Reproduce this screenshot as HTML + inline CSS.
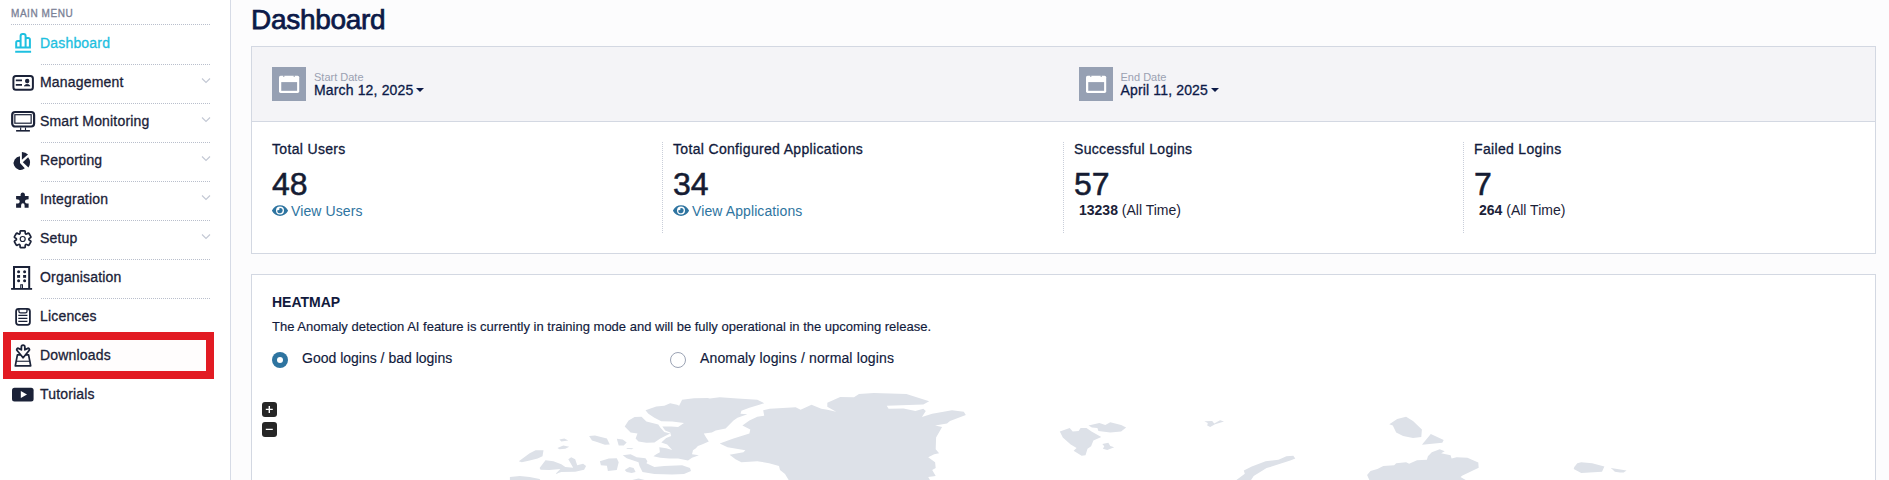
<!DOCTYPE html>
<html><head><meta charset="utf-8">
<style>
*{box-sizing:border-box;margin:0;padding:0}
html,body{width:1889px;height:480px;overflow:hidden;background:#fcfcfd;font-family:"Liberation Sans",sans-serif;color:#1b2238}
.abs{position:absolute}
#side{position:absolute;left:0;top:0;width:231px;height:480px;background:#fff;border-right:1px solid #d6dbe6}
.mm{position:absolute;left:11px;top:8px;font-size:10px;color:#7a8196;letter-spacing:0.55px;-webkit-text-stroke:0.3px #7a8196}
.sep{position:absolute;height:0;border-top:1px dotted #b9bfcc}
.nav{position:absolute;left:40px;font-size:14px;letter-spacing:0.18px;color:#1b2238;white-space:nowrap;-webkit-text-stroke:0.3px #1b2238}
.chev{position:absolute;left:201px;width:7px;height:7px;border-right:1px solid #c5cad6;border-bottom:1px solid #c5cad6;transform:rotate(45deg)}
#title{position:absolute;left:251px;top:4px;font-size:28px;letter-spacing:-0.3px;color:#0c1a48;-webkit-text-stroke:0.75px #0c1a48}
.card{position:absolute;background:#fff;border:1px solid #d3d8e2}
.hdr{position:absolute;left:0;top:0;right:0;height:75px;background:#f4f4f7;border-bottom:1px solid #d3d8e2}
.calbox{position:absolute;width:34px;height:34px;background:#96a0b3}
.dlabel{position:absolute;font-size:11px;color:#9aa1b2}
.dval{position:absolute;font-size:14px;letter-spacing:0.15px;color:#0c1a48;white-space:nowrap;-webkit-text-stroke:0.3px #0c1a48}
.caret{display:inline-block;width:0;height:0;border-left:4px solid transparent;border-right:4px solid transparent;border-top:4px solid #0c1a48;vertical-align:middle;margin-left:3px;position:relative;top:-1px}
.stt{position:absolute;font-size:14px;letter-spacing:0.33px;color:#111a3c;white-space:nowrap;-webkit-text-stroke:0.3px #111a3c}
.num{position:absolute;font-size:32px;color:#151c33;-webkit-text-stroke:0.55px #151c33}
.lnk{position:absolute;font-size:14px;letter-spacing:0.1px;color:#2e74a0;white-space:nowrap}
.vdiv{position:absolute;top:142px;height:91px;width:0;border-left:1px dotted #c9ced9}
.alltime{position:absolute;font-size:14px;color:#1b2238;white-space:nowrap}
</style></head>
<body>
<div id="side">
  <div class="mm">MAIN MENU</div>
  <div class="sep" style="left:11px;width:199px;top:24px"></div>
  <div class="nav" style="top:35px;color:#1ec0e0;-webkit-text-stroke:0.3px #1ec0e0">Dashboard</div>
  <div class="sep" style="left:41px;width:169px;top:64px"></div>
  <div class="nav" style="top:74px">Management</div><svg class="abs" style="left:200px;top:77px" width="12" height="8"><path d="M2 1.5L6 5.5L10 1.5" fill="none" stroke="#c3c8d4" stroke-width="1.1"/></svg>
  <div class="sep" style="left:41px;width:169px;top:103px"></div>
  <div class="nav" style="top:113px">Smart Monitoring</div><svg class="abs" style="left:200px;top:116px" width="12" height="8"><path d="M2 1.5L6 5.5L10 1.5" fill="none" stroke="#c3c8d4" stroke-width="1.1"/></svg>
  <div class="sep" style="left:41px;width:169px;top:142px"></div>
  <div class="nav" style="top:152px">Reporting</div><svg class="abs" style="left:200px;top:155px" width="12" height="8"><path d="M2 1.5L6 5.5L10 1.5" fill="none" stroke="#c3c8d4" stroke-width="1.1"/></svg>
  <div class="sep" style="left:41px;width:169px;top:181px"></div>
  <div class="nav" style="top:191px">Integration</div><svg class="abs" style="left:200px;top:194px" width="12" height="8"><path d="M2 1.5L6 5.5L10 1.5" fill="none" stroke="#c3c8d4" stroke-width="1.1"/></svg>
  <div class="sep" style="left:41px;width:169px;top:220px"></div>
  <div class="nav" style="top:230px">Setup</div><svg class="abs" style="left:200px;top:233px" width="12" height="8"><path d="M2 1.5L6 5.5L10 1.5" fill="none" stroke="#c3c8d4" stroke-width="1.1"/></svg>
  <div class="sep" style="left:41px;width:169px;top:259px"></div>
  <div class="nav" style="top:269px">Organisation</div>
  <div class="sep" style="left:41px;width:169px;top:298px"></div>
  <div class="nav" style="top:308px">Licences</div>
  <div class="abs" style="left:3px;top:332px;width:211px;height:47px;border:8px solid #e21b23;background:#fffdfd"></div>
  <div class="nav" style="top:347px">Downloads</div>
  <div class="nav" style="top:386px">Tutorials</div>
  <svg class="abs" style="left:0;top:0" width="231" height="480" viewBox="0 0 231 480">
    <g fill="none" stroke="#1ec0e0" stroke-width="2">
      <path d="M16.2 47.6V42.4a1.5 1.5 0 0 1 1.5-1.5H19.1a1.5 1.5 0 0 1 1.5 1.5V47.6ZM20.6 47.6V35.9a2 2 0 0 1 2-2H23.6a2 2 0 0 1 2 2V47.6ZM25.6 47.6V39.5a1.5 1.5 0 0 1 1.5-1.5H28.4a1.5 1.5 0 0 1 1.5 1.5V47.6Z"/>
      <path d="M15.2 51.75H31.1"/>
    </g>
    <g fill="none" stroke="#1b2238">
      <rect x="13.4" y="76" width="19.5" height="13.75" rx="2.5" stroke-width="2"/>
      <path d="M15.8 80.4H22M15.8 84.9H22" stroke-width="1.8"/>
      <circle cx="27.2" cy="81" r="1.6" fill="#1b2238" stroke-width="1.2"/>
      <path d="M24.3 85.9Q27.2 82.6 30.1 85.9Z" fill="#1b2238" stroke-width="0.8"/>
      <rect x="12.2" y="112" width="21.9" height="14.5" rx="3" stroke-width="2.2"/>
      <rect x="14.85" y="114.7" width="16.3" height="8.5" stroke-width="1.2"/>
      <path d="M20.65 127.5V130M25.5 127.5V130" stroke-width="1.1"/>
      <path d="M16.1 130.8H29.9" stroke-width="1.6"/>
      <path d="M20.14 232.71Q19.79 230.93 20.86 230.84L24.44 230.84Q25.51 230.93 25.16 232.71Q25.35 234.57 27.06 233.81L27.06 233.81Q28.42 232.61 29.04 233.50L30.83 236.59Q31.29 237.57 29.56 238.15Q28.05 239.25 29.56 240.35L29.56 240.35Q31.29 240.93 30.83 241.91L29.04 245.00Q28.42 245.89 27.06 244.69Q25.35 243.93 25.16 245.79L25.16 245.79Q25.51 247.57 24.44 247.66L20.86 247.66Q19.79 247.57 20.14 245.79Q19.95 243.93 18.24 244.69L18.24 244.69Q16.88 245.89 16.26 245.00L14.47 241.91Q14.01 240.93 15.74 240.35Q17.25 239.25 15.74 238.15L15.74 238.15Q14.01 237.57 14.47 236.59L16.26 233.50Q16.88 232.61 18.24 233.81Q19.95 234.57 20.14 232.71Z" stroke-width="1.7" stroke-linejoin="round"/>
      <circle cx="22.7" cy="239" r="2.5" stroke-width="1.2"/>
      <path d="M14 289V267.1H29.2V289" stroke-width="2"/>
      <path d="M11.1 288.9H32.1" stroke-width="1.8"/>
      <path d="M20.75 288V284.75H22.45V288" stroke-width="1.1"/>
      <rect x="16.1" y="308.8" width="13.8" height="16" rx="2.5" stroke-width="1.8"/>
      <path d="M18.9 309V311.2a1.6 1.6 0 0 0 1.6 1.6H25.4a1.6 1.6 0 0 0 1.6-1.6V309" stroke-width="1.3"/>
      <path d="M18.3 315.4H27.4M18.3 318.3H27.4M18.3 321.3H27.4" stroke-width="1.3"/>
      <path d="M20.8 354.9H17.4L15.3 365.85H30.7L28.6 354.9H25.4" stroke-width="1.7" stroke-linejoin="round"/>
      <path d="M15.8 361.25H30.2" stroke-width="1.1"/>
      <path d="M21.35 349.8V346.9A1.75 1.75 0 0 1 24.85 346.9V349.8L27.3 348.6A1.35 1.35 0 0 1 28.9 350.8L23.1 357.8L17.3 350.8A1.35 1.35 0 0 1 18.9 348.6Z" stroke-width="1.8" stroke-linejoin="round"/>
    </g>
    <g fill="#1b2238">
      <path d="M20 156.3V163.1L24.8 168.3A6.8 6.8 0 1 1 20 156.3Z"/>
      <path d="M22.8 162.3L28.1 157.3A8.5 8.5 0 0 1 28.4 167.4Z"/>
      <path d="M21.9 151.9A8 8 0 0 1 28 154.6L21.9 159.8Z"/>
      <path d="M16.1 196H20.6V194.3A2.2 2.2 0 0 1 24.9 194.3V196H28.6V199.2A3.6 2.2 0 0 0 28.6 203.6V207.7H24.6V205.4A1.75 2.2 0 0 0 21.1 205.4V207.7H16.1V203.6A3.6 2.2 0 0 0 16.1 199.2Z"/>
      <circle cx="18.6" cy="271.8" r="1.5"/><circle cx="24.6" cy="271.8" r="1.5"/>
      <rect x="17.1" y="275" width="3" height="2.8"/><rect x="23.1" y="275" width="3" height="2.8"/>
      <circle cx="18.6" cy="280.8" r="1.5"/><circle cx="24.6" cy="280.8" r="1.5"/>
      <rect x="12" y="387.75" width="21.6" height="13.75" rx="2.5"/>
    </g>
    <path d="M20.8 390.9L27 394.5L20.8 398Z" fill="#fff"/>
  </svg>
</div>

<div id="title">Dashboard</div>

<div class="card" style="left:251px;top:46px;width:1625px;height:208px">
  <div class="hdr"></div>
</div>

<div class="calbox" style="left:272px;top:67px"></div>
<div class="dlabel" style="left:314px;top:71px">Start Date</div>
<div class="dval" style="left:314px;top:82px">March 12, 2025<span class="caret"></span></div>
<div class="calbox" style="left:1079px;top:67px"></div>
<svg class="abs" style="left:0;top:0" width="1889" height="480" viewBox="0 0 1889 480">
  <rect x="279.0" y="75.7" width="20.2" height="17.2" rx="1.6" fill="#fff"/>
  <rect x="281.25" y="82.1" width="15.85" height="8.7" fill="#96a0b3"/>
  <path d="M283.8 75.2v1.8M294.2 75.2v1.8" stroke="#96a0b3" stroke-width="1"/>
</svg>
<svg class="abs" style="left:0;top:0" width="1889" height="480" viewBox="0 0 1889 480">
  <rect x="1086.0" y="75.7" width="20.2" height="17.2" rx="1.6" fill="#fff"/>
  <rect x="1088.25" y="82.1" width="15.85" height="8.7" fill="#96a0b3"/>
  <path d="M1090.8 75.2v1.8M1101.2 75.2v1.8" stroke="#96a0b3" stroke-width="1"/>
</svg>
<div class="dlabel" style="left:1120.5px;top:71px">End Date</div>
<div class="dval" style="left:1120.5px;top:82px">April 11, 2025<span class="caret"></span></div>

<div class="stt" style="left:272px;top:141px">Total Users</div>
<div class="num" style="left:272px;top:166px">48</div>
<div class="lnk" style="left:291px;top:203px">View Users</div>
<div class="vdiv" style="left:662px"></div>
<div class="stt" style="left:673px;top:141px">Total Configured Applications</div>
<div class="num" style="left:673px;top:166px">34</div>
<div class="lnk" style="left:692px;top:203px">View Applications</div>
<div class="vdiv" style="left:1063px"></div>
<div class="stt" style="left:1074px;top:141px">Successful Logins</div>
<div class="num" style="left:1074px;top:166px">57</div>
<div class="alltime" style="left:1079px;top:202px"><b>13238</b> (All Time)</div>
<div class="vdiv" style="left:1463px"></div>
<div class="stt" style="left:1474px;top:141px">Failed Logins</div>
<div class="num" style="left:1474px;top:166px">7</div>
<div class="alltime" style="left:1479px;top:202px"><b>264</b> (All Time)</div>

<div class="card" style="left:251px;top:274px;width:1625px;height:220px"></div>
<svg class="abs" style="left:0;top:0" width="1889" height="480" viewBox="0 0 1889 480">
  <path fill="#dde1e8" d="M645.5 410.3L656.3 406.4L664.3 405.8L670.2 403.2L677.1 404.8L679.1 405.8L682.1 399.8L693.9 398.3L707.8 397.9L709.8 398.5L719.7 397.3L737.5 398.5L757.3 399.8L764.2 403.2L759.3 404.8L749.4 407.8L741.4 410.7L740.5 413.7L747.4 414.3L737.5 417.7L733.5 420.6L727.6 426.6L725.6 428.5L715.7 430.5L711.8 432.5L703.8 433.5L705.8 436.9L708.8 441.4L701.9 444.4L697.9 446.0L695.9 448.3L693.0 450.3L692.0 454.3L698.9 455.3L692.0 457.8L688.0 460.6L678.1 458.6L669.2 458.6L660.3 457.8L653.4 456.2L656.3 454.3L659.9 452.3L659.3 447.3L666.2 448.3L672.2 449.9L667.2 444.4L661.3 442.4L666.2 438.0L671.2 436.1L670.2 432.5L665.2 430.5L662.3 426.6L671.2 426.6L678.1 427.0L684.0 423.0L672.2 421.6L661.3 421.2L654.4 417.7L648.4 413.7ZM624.7 426.6L628.6 420.6L634.6 417.1L641.5 416.7L646.4 421.6L658.3 424.6L660.3 427.5L664.3 432.1L670.2 433.5L666.2 435.5L660.3 438.4L654.4 442.4L646.4 442.8L638.5 441.4L635.6 438.4L637.5 433.5L630.6 432.5ZM559.4 439.4L564.3 438.4L568.3 440.4L561.3 441.4ZM557.4 447.9L563.3 445.4L569.3 446.7L565.3 448.7L559.4 449.3ZM589.1 436.1L595.0 435.5L606.9 438.4L609.8 444.4L604.9 444.8L597.0 442.0L592.0 440.4ZM616.8 438.8L622.7 439.4L626.7 442.4L623.7 445.4L618.7 445.4ZM626.7 447.9L633.6 448.3L631.6 449.3L626.7 448.7ZM518.8 461.2L529.7 453.3L535.6 450.3L543.5 450.3L542.5 456.2L537.6 458.6L529.7 460.6L521.8 462.2ZM539.6 468.1L545.5 460.2L553.4 461.2L561.3 464.2L565.3 467.1L573.2 467.7L568.3 459.2L571.2 457.2L575.2 459.2L577.2 465.2L583.1 463.8L586.1 466.1L584.1 469.7L575.2 471.7L561.3 472.1L555.4 474.1L560.4 469.1L549.5 470.1L540.6 469.7ZM599.9 461.2L608.8 458.6L616.8 458.2L618.7 462.2L616.8 470.1L607.9 471.1L606.9 465.7L600.9 465.2ZM622.7 455.3L630.6 454.3L636.6 457.2L645.5 458.2L647.4 461.2L646.4 463.2L654.4 467.1L664.3 466.1L682.1 465.2L690.0 468.1L691.0 471.1L684.0 474.1L672.2 474.5L654.4 474.1L642.5 472.1L639.5 466.1L638.5 462.2L626.7 458.2ZM624.7 470.1L629.6 467.1L633.6 468.1L635.6 472.1L631.6 473.1L626.7 472.1ZM509.9 477.0L519.8 476.0L529.7 477.0L539.6 479.0L540.6 480.4L509.9 480.4ZM630.6 480.4L638.5 478.4L646.4 480.4ZM788.9 480.4L785.0 474.1L780.0 470.1L779.0 466.1L769.1 463.2L757.3 461.2L741.4 462.2L735.5 459.2L729.6 454.7L743.4 452.3L745.4 450.3L727.6 447.3L719.7 443.4L733.5 438.4L749.4 433.5L750.3 429.5L742.4 425.6L749.4 420.6L757.3 416.7L764.2 415.7L763.2 410.3L769.9 408.7L795.6 407.2L800.6 409.7L811.5 404.8L821.3 408.7L827.3 409.7L836.2 411.7L827.3 406.8L827.3 402.8L840.2 396.9L854.0 397.3L859.0 393.9L873.8 392.9L906.4 393.9L929.2 401.2L923.3 404.4L886.7 405.8L888.6 408.7L903.5 408.4L915.4 411.1L923.3 408.7L925.8 411.1L921.9 417.1L932.2 413.7L952.0 410.3L963.8 411.7L965.8 415.1L950.0 421.0L947.0 423.6L935.1 425.6L942.1 427.0L936.1 437.4L935.7 449.3L939.1 453.3L934.2 454.3L928.2 457.2L935.1 462.2L935.7 468.1L932.2 470.1L935.7 476.0L928.2 477.0L930.2 480.4ZM1059.8 431.5L1069.7 428.1L1072.7 431.5L1078.6 431.1L1080.6 428.1L1086.5 428.1L1091.5 431.5L1101.3 436.9L1093.4 440.4L1091.1 446.3L1087.5 448.7L1085.5 455.3L1081.6 455.8L1073.6 450.7L1076.6 447.9L1070.7 444.4L1062.8 437.4ZM1088.5 425.6L1099.4 423.0L1105.3 425.0L1110.3 422.2L1121.1 425.0L1126.1 427.5L1121.1 431.5L1110.3 432.5L1098.4 430.9L1097.4 428.1L1091.9 427.5ZM1102.3 444.0L1108.3 442.8L1110.3 446.0L1114.2 447.3L1107.3 449.9L1102.9 448.7L1104.3 446.3ZM1204.3 421.2L1212.2 421.0L1214.2 423.6L1220.1 420.2L1224.0 421.6L1215.1 424.2L1210.2 427.0L1207.2 425.6L1207.8 423.0ZM1243.8 470.5L1251.8 466.5L1265.6 461.2L1278.5 459.8L1286.4 456.2L1293.3 455.7L1295.3 458.6L1290.3 460.6L1266.6 468.1L1253.7 476.0L1250.8 480.4L1235.9 480.4L1244.8 473.7ZM1389.3 424.2L1397.2 419.0L1406.1 416.7L1413.0 421.0L1421.9 429.5L1421.3 436.9L1413.0 438.0L1403.1 436.1L1396.2 432.5L1392.8 425.6ZM1421.9 444.8L1430.8 434.1L1443.7 440.0L1442.3 442.8ZM1367.1 475.0L1370.5 471.1L1377.4 469.1L1383.3 466.1L1394.2 465.2L1396.2 463.2L1406.1 462.2L1409.1 463.8L1417.0 460.2L1426.9 459.8L1427.9 456.2L1431.8 452.3L1439.7 449.3L1444.7 451.3L1441.1 453.3L1450.6 455.3L1451.6 458.6L1456.6 457.2L1467.4 457.8L1478.3 462.6L1478.7 467.7L1462.5 475.6L1460.5 477.0L1466.4 480.4L1369.5 480.4ZM1574.3 467.1L1577.3 463.2L1581.2 462.2L1592.1 463.2L1604.4 466.5L1602.0 471.7L1581.2 473.1L1573.7 469.1ZM1610.9 468.1L1620.0 469.7L1620.0 472.5L1614.9 471.7ZM1610.8 468.1L1626.6 470.5L1623.6 472.5L1618.7 472.5Z"/>
</svg>
<div class="abs" style="left:272px;top:294px;font-size:14px;font-weight:bold;color:#111a3c">HEATMAP</div>
<div class="abs" style="left:272px;top:319px;font-size:13px;color:#111a3c;white-space:nowrap;-webkit-text-stroke:0.15px #111a3c">The Anomaly detection AI feature is currently in training mode and will be fully operational in the upcoming release.</div>
<div class="abs" style="left:272px;top:352px;width:16px;height:16px;border-radius:50%;background:#2e74a0"></div>
<div class="abs" style="left:277px;top:357px;width:6px;height:6px;border-radius:50%;background:#fff"></div>
<div class="abs" style="left:302px;top:350px;font-size:14px;color:#111a3c;white-space:nowrap;-webkit-text-stroke:0.15px #111a3c">Good logins / bad logins</div>
<div class="abs" style="left:670px;top:352px;width:16px;height:16px;border-radius:50%;border:1px solid #9ba3b4;background:#fff"></div>
<div class="abs" style="left:700px;top:350px;letter-spacing:0.14px;font-size:14px;color:#111a3c;white-space:nowrap;-webkit-text-stroke:0.15px #111a3c">Anomaly logins / normal logins</div>
<div class="abs" style="left:262px;top:402px;width:15px;height:15px;border-radius:3px;background:#262626"></div>
<div class="abs" style="left:262px;top:422px;width:15px;height:15px;border-radius:3px;background:#262626"></div>
<svg class="abs" style="left:0;top:0" width="1889" height="480" viewBox="0 0 1889 480">
  <path d="M265.8 409.4H272.8M269.3 405.9V412.9M265.8 429.4H272.8" stroke="#fff" stroke-width="1.4"/>
  <path fill="#2e74a0" transform="translate(272 203.5) scale(0.02778)" d="M572.52 241.4C518.29 135.59 410.93 64 288 64S57.68 135.64 3.48 241.41a32.35 32.35 0 0 0 0 29.19C57.71 376.41 165.07 448 288 448s230.32-71.64 284.52-177.41a32.35 32.35 0 0 0 0-29.19zM288 400a144 144 0 1 1 144-144 143.93 143.93 0 0 1-144 144zm0-240a95.31 95.31 0 0 0-25.31 3.79 47.85 47.85 0 0 1-66.9 66.9A95.78 95.78 0 1 0 288 160z"/>
  <path fill="#2e74a0" transform="translate(673 203.5) scale(0.02778)" d="M572.52 241.4C518.29 135.59 410.93 64 288 64S57.68 135.64 3.48 241.41a32.35 32.35 0 0 0 0 29.19C57.71 376.41 165.07 448 288 448s230.32-71.64 284.52-177.41a32.35 32.35 0 0 0 0-29.19zM288 400a144 144 0 1 1 144-144 143.93 143.93 0 0 1-144 144zm0-240a95.31 95.31 0 0 0-25.31 3.79 47.85 47.85 0 0 1-66.9 66.9A95.78 95.78 0 1 0 288 160z"/>
</svg>
</body></html>
